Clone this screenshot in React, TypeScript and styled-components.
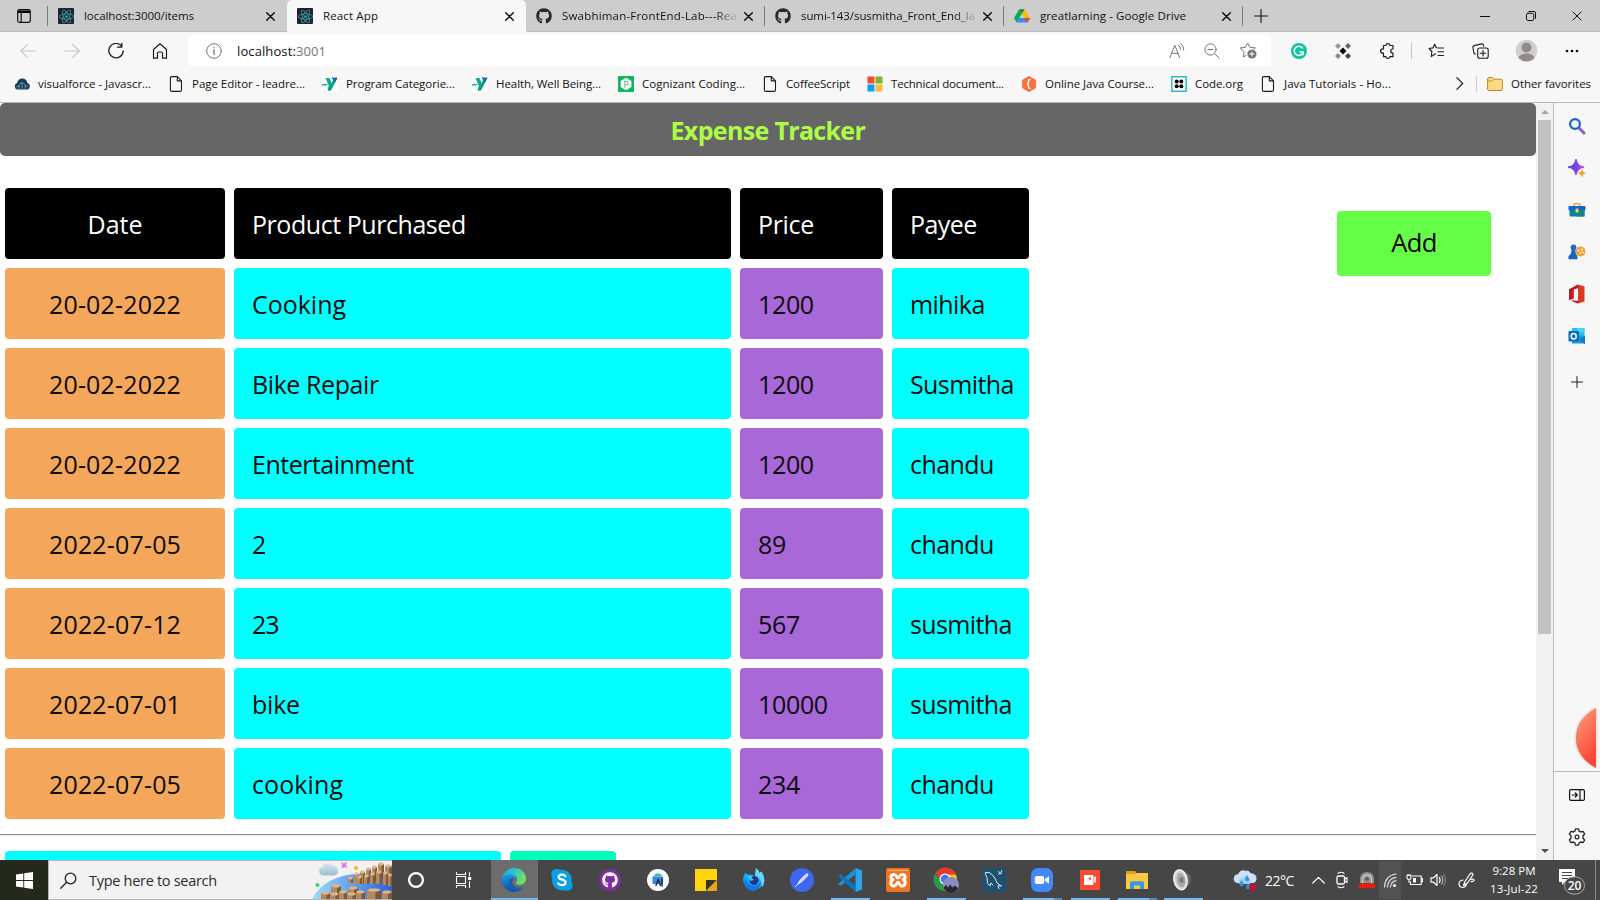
import React, { useLayoutEffect, useRef, useState } from "react";
import styled, { createGlobalStyle, css } from "styled-components";
import { FaGithub, FaReact } from "react-icons/fa";

const GlobalStyle = createGlobalStyle`
  * { box-sizing: border-box; }
  body {
    margin: 0;
    overflow: hidden;
    background: #fff;
    font-family: "Open Sans", "Noto Sans", sans-serif;
    color: #111;
  }
  svg { display: block; flex: none; }
`;

/* ---------- text that is tracked to a set measure ---------- */

const Measure = styled.span<{ $w: number }>`
  display: block;
  flex: none;
  width: ${(p) => p.$w}px;
  white-space: nowrap;
`;

const Tracked = styled.span`
  display: inline-block;
`;

function Fit({ w, children }: { w: number; children: React.ReactNode }) {
  const ref = useRef<HTMLSpanElement>(null);
  const [spacing, setSpacing] = useState(0);
  useLayoutEffect(() => {
    const el = ref.current;
    if (!el) return;
    const n = (el.textContent || "").length;
    const natural = el.getBoundingClientRect().width;
    if (n > 1) setSpacing((w - natural) / (n - 0.5));
  }, [w]);
  return (
    <Measure $w={w}>
      <Tracked ref={ref} style={{ letterSpacing: spacing }}>
        {children}
      </Tracked>
    </Measure>
  );
}

/* ---------- window ---------- */

const Screen = styled.div`
  display: flex;
  flex-direction: column;
  width: 1600px;
  height: 900px;
  overflow: hidden;
`;

const TabStrip = styled.div`
  display: flex;
  height: 32px;
  background: #cdcdcd;
  border-bottom: 1px solid #bdbdbd;
`;

const TabActions = styled.div`
  display: flex;
  align-items: center;
  justify-content: flex-end;
  gap: 16px;
  width: 48px;
`;

const NewTab = styled.div`
  display: flex;
  align-items: center;
  justify-content: center;
  width: 35px;
`;

const Rule = styled.i<{ $h: number; $c?: string }>`
  flex: none;
  width: 1px;
  height: ${(p) => p.$h}px;
  background: ${(p) => p.$c || "#7c7c7c"};
`;

const Tab = styled.div<{ $active?: boolean }>`
  display: flex;
  align-items: center;
  flex: none;
  width: 239px;
  height: 32px;
  padding-left: 10px;
  font-size: 11.5px;
  ${(p) =>
    p.$active &&
    css`
      background: #f7f7f7;
      border-radius: 5px 5px 0 0;
    `}
`;

const TabTitle = styled.div<{ $fade?: boolean }>`
  flex: none;
  width: 174px;
  margin: 0 8px 0 10px;
  overflow: hidden;
  line-height: 18px;
  ${(p) => p.$fade && css`mask-image: linear-gradient(to right, #000 88%, transparent 102%);`}
`;

const TabEnd = styled.div`
  display: flex;
  align-items: center;
  justify-content: flex-end;
  flex: 1;
`;

const Spacer = styled.div`
  flex: 1;
`;

const WindowButtons = styled.div`
  display: flex;
  align-items: center;
  gap: 36px;
  padding-right: 18px;
`;

const Toolbar = styled.div`
  display: flex;
  align-items: center;
  height: 36px;
  padding: 1px 0 0 20px;
  background: #f7f7f7;
`;

const NavButtons = styled.div`
  display: flex;
  align-items: center;
  gap: 28px;
  width: 168px;
`;

const AddressBar = styled.div`
  display: flex;
  align-items: center;
  width: 1083px;
  height: 31px;
  padding: 0 14px 0 18px;
  background: #fff;
  border-radius: 4px;
  font-size: 13px;
`;

const Url = styled.div`
  margin-left: 15px;
`;

const Muted = styled.span`
  color: #757575;
`;

const AddressIcons = styled.div`
  display: flex;
  gap: 19px;
  align-items: center;
`;

const ToolbarIcons = styled.div`
  display: grid;
  grid-template-columns: 44px 44px 44px 4px 46px 42px 50px 41px;
  align-items: center;
  justify-items: center;
  padding-left: 6px;
`;

const Bookmarks = styled.div`
  display: flex;
  align-items: center;
  height: 35px;
  padding: 0 9px 3px 14px;
  background: #f7f7f7;
  border-bottom: 1px solid #bababa;
  font-size: 11.5px;
`;

const Bookmark = styled.div<{ $end?: number }>`
  display: flex;
  align-items: center;
  gap: 8px;
  margin-right: ${(p) => p.$end ?? 17}px;
  line-height: 18px;
`;

const FavoritesFolder = styled.div`
  display: flex;
  align-items: center;
  gap: 8px;
  margin-left: 10px;
  line-height: 18px;
`;

const Body = styled.div`
  display: flex;
  height: 757px;
`;

/* ---------- expense page ---------- */

const Page = styled.main`
  width: 1536px;
  height: 757px;
  overflow: hidden;
  background: #fff;
`;

const Title = styled.h1`
  display: flex;
  justify-content: center;
  height: 53px;
  margin: 0;
  border-radius: 5px;
  background: #666;
  color: #adff45;
  font-size: 25px;
  line-height: 55px;
  font-weight: 700;
`;

const Content = styled.div`
  display: flex;
  justify-content: space-between;
  height: 678px;
  padding: 32px 45px 0 5px;
`;

const Table = styled.div`
  display: grid;
  grid-template-columns: 220px 497px 143px 137px;
  grid-auto-rows: 71px;
  gap: 9px;
`;

type Tone = "head" | "date" | "name" | "price";
const tones: Record<Tone, string> = {
  head: "#000",
  date: "#f4a65b",
  name: "#00ffff",
  price: "#a968d7",
};

const Cell = styled.div<{ $tone: Tone; $center?: boolean }>`
  display: flex;
  align-items: center;
  justify-content: ${(p) => (p.$center ? "center" : "flex-start")};
  padding: 0 ${(p) => (p.$center ? 0 : 18)}px;
  border-radius: 4px;
  background: ${(p) => tones[p.$tone]};
  color: ${(p) => (p.$tone === "head" ? "#fff" : "#0c0c0c")};
  font-size: 25px;
`;

const AddButton = styled.button`
  display: flex;
  align-items: center;
  justify-content: center;
  width: 154px;
  height: 65px;
  margin-top: 23px;
  padding: 0 0 4px;
  border: 0;
  border-radius: 4px;
  background: #66ff47;
  color: #000;
  font: 25.5px "Open Sans", sans-serif;
`;

const Divider = styled.hr`
  height: 2px;
  margin: 0 0 15px;
  border: 0;
  border-top: 1px solid #8f8f8f;
  border-bottom: 1px solid #ebebeb;
`;

const Totals = styled.div`
  display: flex;
  gap: 9px;
  padding-left: 5px;
`;

const Total = styled.div<{ $w: number; $c: string }>`
  width: ${(p) => p.$w}px;
  height: 71px;
  border-radius: 4px;
  background: ${(p) => p.$c};
`;

const Scrollbar = styled.div`
  display: flex;
  flex-direction: column;
  align-items: center;
  justify-content: space-between;
  width: 17px;
  padding: 7px 0;
  background: #f1f1f1;
`;

const Thumb = styled.div`
  width: 13px;
  height: 514px;
  margin: 6px 0 auto;
  background: #c1c1c1;
`;

const Sidebar = styled.aside`
  display: flex;
  flex-direction: column;
  align-items: center;
  width: 47px;
  border-left: 1px solid #bababa;
  background: #f7f7f7;
`;

const SideSlot = styled.div<{ $drop?: number }>`
  display: flex;
  align-items: center;
  justify-content: center;
  width: 46px;
  height: 42px;
  padding-top: ${(p) => p.$drop || 0}px;
`;

const SideTop = styled.div`
  height: 668px;
  padding-top: 2px;
`;

const SideBottom = styled.div`
  padding-top: 2px;
  border-top: 1px solid #bababa;
`;

const Recorder = styled.div`
  position: absolute;
  left: 1570px;
  top: 702px;
`;

/* ---------- taskbar ---------- */

const Taskbar = styled.footer`
  display: flex;
  height: 40px;
  background: #464646;
  color: #fff;
`;

const Start = styled.div`
  display: flex;
  flex: none;
  align-items: center;
  justify-content: center;
  width: 48px;
  background: #25281c;
`;

const Search = styled.div`
  display: flex;
  flex: none;
  align-items: center;
  width: 344px;
  padding-left: 11px;
  border: 1px solid #b4b4b4;
  border-right: 0;
  background: #f2f2f2;
  color: #2b2b2b;
  font-size: 14.5px;
`;

const SearchText = styled.div`
  flex: 1;
  padding-left: 12px;
`;

const Slot = styled.div<{ $open?: boolean; $active?: boolean; $stack?: boolean; $gap?: number }>`
  display: flex;
  align-items: center;
  justify-content: center;
  flex: none;
  width: 48px;
  height: 40px;
  margin-left: ${(p) => p.$gap || 0}px;
  ${(p) =>
    p.$open &&
    css`
      background: linear-gradient(${p.$stack ? "to right, #76b9ed 31px, #5d89ad 31px" : "#76b9ed, #76b9ed"}) center bottom / 39px 2px no-repeat;
    `}
  ${(p) =>
    p.$active &&
    css`
      background: linear-gradient(#76b9ed, #76b9ed) center bottom / 47px 2px no-repeat,
        linear-gradient(#6c6c6c, #6c6c6c) center / 47px 40px no-repeat;
    `}
`;

const Tray = styled.div`
  display: flex;
  align-items: center;
  flex: 1;
  padding-left: 26px;
`;

const Temp = styled.div`
  margin: 0 16px 0 8px;
  font-size: 14px;
`;

const TraySlot = styled.div<{ $w: number; $lit?: boolean }>`
  display: flex;
  align-items: center;
  justify-content: center;
  flex: none;
  width: ${(p) => p.$w}px;
  height: 38px;
  background: ${(p) => (p.$lit ? "#525252" : "transparent")};
`;

const Clock = styled.div`
  display: flex;
  flex: none;
  flex-direction: column;
  align-items: center;
  width: 50px;
  margin-left: 6px;
  font-size: 11.5px;
  line-height: 18px;
`;

const Notice = styled.div`
  margin: 4px 0 0 20px;
`;

const Desktop = styled.div`
  align-self: stretch;
  width: 5px;
  margin-left: auto;
  border-left: 1px solid #8b8b8b;
`;

/* ---------- icons ---------- */

const line = (c: string, w = 1.2) => ({
  fill: "none",
  stroke: c,
  strokeWidth: w,
  strokeLinecap: "round" as const,
  strokeLinejoin: "round" as const,
});

const Close = ({ s = 9, w = 1.5 }: { s?: number; w?: number }) => (
  <svg width={s} height={s} viewBox="0 0 9 9">
    <path d="M.7.7 8.3 8.3M8.3.7.7 8.3" {...line("#111", w)} />
  </svg>
);

const ReactTile = styled.div`
  display: flex;
  align-items: center;
  justify-content: center;
  flex: none;
  width: 16px;
  height: 16px;
  border-radius: 1px;
  background: #20232a;
  color: #41a9bd;
`;

const ReactIcon = () => (
  <ReactTile>
    <FaReact size={15} />
  </ReactTile>
);

const Drive = () => (
  <svg width="16" height="16" viewBox="0 0 16 16">
    <path d="M5.2 1.2 0 10l2.6 4.5L8 5.5z" fill="#0da75a" />
    <path d="M5.2 1.2h5.3L16 10h-5.3z" fill="#fbbb05" />
    <path d="M5.3 10H16l-2.6 4.5H2.6z" fill="#4284f4" />
    <path d="M10.7 10H16l-2.6 4.5z" fill="#ea4335" />
    <path d="M5.2 1.2h5.3L8 5.6z" fill="#12833c" />
  </svg>
);

const PageIcon = () => (
  <svg width="16" height="16" viewBox="0 0 16 16">
    <path d="M3.8.6h5.6l4.1 4.2v9.1q0 1.5-1.5 1.5H3.8q-1.4 0-1.4-1.4V2Q2.4.6 3.8.6zM9.3.8v4.1h4.1" {...line("#1b1b1b", 1.1)} />
  </svg>
);

const CloudIcon = () => (
  <svg width="16" height="16" viewBox="0 0 16 16">
    <path d="M3.5 13.5a3.3 3.3 0 0 1-.4-6.4C3.8 3.8 6 2.6 8.4 2.6c2.6 0 4.6 1.700 5 4.300 3.300.8 3.300 6-.3 6.600z" fill="#123f55" />
    <path d="M5 12.5V8.700l3-2.200 3.200 2.200v3.800M8 6.500v6M2.700 10.500h2.300M11.200 10h2.500" {...line("#8fb1bf", 0.7)} />
  </svg>
);

const YIcon = () => (
  <svg width="16" height="16" viewBox="0 0 16 16">
    <path d="M0 0h16v16H0z" fill="#fff" />
    <path d="M3.5 2h4l2 4.500L8 14.500H5.500l1.200-5z" fill="#12a892" />
    <path d="m8.500 2 7 0-6.500 12.500H5.800L12 2z" fill="#0b9d86" />
    <path d="M9.300 1.500h6.200l-2.400 5z" fill="#0f6cc0" />
    <path d="m.3 9.200 1.700-.8 1.400.8 1.600-1" {...line("#19a58c", 1.3)} />
  </svg>
);

const CodingIcon = () => (
  <svg width="16" height="16" viewBox="0 0 16 16">
    <path d="M0 0h16v16H0z" fill="#14b45c" />
    <path d="m8 1.800 5.400 3.100v6.200L8 14.200l-5.400-3.100V4.900z" fill="#fff" />
    <path d="M6.800 11.200V5.500h1.600a1.600 1.600 0 0 1 0 3.300H6.800" {...line("#6cc58b", 1.1)} />
  </svg>
);

const MsIcon = () => (
  <svg width="16" height="16" viewBox="0 0 16 16">
    <path d="M.5.5h7v7h-7z" fill="#fb4a25" />
    <path d="M8.500.5h7v7h-7z" fill="#76b82c" />
    <path d="M.5 8.500h7v7h-7z" fill="#00a1ee" />
    <path d="M8.500 8.500h7v7h-7z" fill="#ffb83c" />
  </svg>
);

const JavaIcon = () => (
  <svg width="16" height="16" viewBox="0 0 16 16">
    <path d="m8 0 6.900 4v8L8 16l-6.900-4V4z" fill="#fb6f3c" />
    <path d="M9 3.500Q7.500 3.500 7.500 5v1.700L6.300 8l1.200 1.300V11q0 1.500 1.500 1.500" {...line("#fff", 1.4)} />
  </svg>
);

const CodeOrgIcon = () => (
  <svg width="16" height="16" viewBox="0 0 16 16">
    <path d="M.8.8h14.400v14.400H.8z" fill="#fff" stroke="#2fbac2" strokeWidth="1.5" />
    <circle cx="5.7" cy="5.6" r="2" /><circle cx="10.3" cy="5.6" r="2" />
    <circle cx="5.7" cy="10.3" r="2" /><circle cx="10.3" cy="10.3" r="2" />
  </svg>
);

const FolderIcon = () => (
  <svg width="16" height="16" viewBox="0 0 16 16">
    <path d="M.6 3q0-1.500 1.500-1.500h3.200L7 3.200h7q1.400 0 1.400 1.400v8.500q0 1.400-1.400 1.400H2q-1.400 0-1.400-1.400z" fill="#ffd983" stroke="#b88a28" />
    <path d="M.6 5h4.600L7 3.200" fill="none" stroke="#c3922d" />
  </svg>
);

/* ---------- data ---------- */

const tabs = [
  { icon: <ReactIcon />, title: "localhost:3000/items", w: 110 },
  { icon: <ReactIcon />, title: "React App", w: 55, active: true },
  { icon: <FaGithub size={16} color="#24292f" />, title: "Swabhiman-FrontEnd-Lab---Rea", w: 175, fade: true, rule: true },
  { icon: <FaGithub size={16} color="#24292f" />, title: "sumi-143/susmitha_Front_End_la", w: 174, fade: true, rule: true },
  { icon: <Drive />, title: "greatlarning - Google Drive", w: 146, rule: true },
];

const bookmarks: [React.ReactNode, string, number][] = [
  [<CloudIcon />, "visualforce - Javascr...", 113],
  [<PageIcon />, "Page Editor - leadre...", 113],
  [<YIcon />, "Program Categorie...", 109],
  [<YIcon />, "Health, Well Being...", 105],
  [<CodingIcon />, "Cognizant Coding...", 103],
  [<PageIcon />, "CoffeeScript", 64],
  [<MsIcon />, "Technical document...", 113],
  [<JavaIcon />, "Online Java Course...", 109],
  [<CodeOrgIcon />, "Code.org", 48],
  [<PageIcon />, "Java Tutorials - Ho...", 107],
];

const rows: [string, string, number, string, number, string, number][] = [
  ["20-02-2022", "Cooking", 94, "1200", 56, "mihika", 75],
  ["20-02-2022", "Bike Repair", 127, "1200", 56, "Susmitha", 104],
  ["20-02-2022", "Entertainment", 162, "1200", 56, "chandu", 84],
  ["2022-07-05", "2", 14, "89", 28, "chandu", 84],
  ["2022-07-12", "23", 27, "567", 42, "susmitha", 102],
  ["2022-07-01", "bike", 48, "10000", 70, "susmitha", 102],
  ["2022-07-05", "cooking", 91, "234", 42, "chandu", 84],
];

/* basalt columns for the search box picture */
const columns: [number, number, number, number][] = [
  [60, 6, 5, 14], [66, 3, 6, 14], [73, 5, 7, 15], [54, 8, 5, 13], [48, 11, 5, 12], [42, 13, 5, 10],
  [36, 17, 5, 5], [45, 16, 5, 7], [52, 15, 5, 8], [58, 13, 5, 10], [64, 11, 6, 12], [71, 12, 5, 12], [76, 14, 4, 11],
  [19, 25, 10, 13], [36, 27, 10, 11], [9, 32, 9, 6], [18, 33, 9, 5], [27, 31, 8, 7], [35, 33, 9, 5], [44, 31, 9, 7], [55, 29, 14, 9], [70, 31, 10, 7],
];

const SearchArt = () => (
  <svg width="80" height="38" viewBox="0 0 80 38">
    <defs>
      <linearGradient id="sea" x1="0" x2="1"><stop offset="0" stopColor="#9be0ff" /><stop offset="1" stopColor="#2b62d9" /></linearGradient>
      <linearGradient id="cld" x1="0" y1="0" x2="0" y2="1"><stop offset="0" stopColor="#d5e6ee" /><stop offset="1" stopColor="#9dbdcb" /></linearGradient>
    </defs>
    <path d="M0 38Q12 15 45 13h35v25z" fill="url(#sea)" />
    <path d="M11 14.500a4.500 4.500 0 0 1-.5-8.800Q12 1.500 16.500 2.500q3-1 5 2.500 4 0 4.500 5 0 4-4 4.500z" fill="url(#cld)" />
    <path d="m29 1 3 1.500L35 .5 34 4l1.500 3-3-1-3 1.500.5-3.500z" fill="#da7bf2" />
    <circle cx="44" cy="7" r="2" fill="#fbb116" />
    <circle cx="5.5" cy="24" r="2" fill="#4dcb76" />
    {columns.map(([x, y, w, h], i) => (
      <g key={i}>
        <path d={`M${x} ${y}h${w}v${h}h-${w}z`} fill="#b38a60" />
        <path d={`M${x + w * 0.6} ${y}h${w * 0.4}v${h}h-${w * 0.4}z`} fill="#7c583a" />
        <path d={`M${x} ${y}l${w / 4}-1.600h${w / 2}l${w / 4} 1.600-${w / 4} 1.500h-${w / 2}z`} fill="#dcb78b" />
      </g>
    ))}
  </svg>
);

const EdgeIcon = () => (
  <svg width="24" height="24" viewBox="0 0 24 24">
    <defs>
      <linearGradient id="eg" x1="0" y1="0" x2="1" y2=".3"><stop offset="0" stopColor="#1e9fdc" /><stop offset=".55" stopColor="#34c7c9" /><stop offset="1" stopColor="#6fe35a" /></linearGradient>
      <linearGradient id="eb" x1="0" y1="0" x2="0" y2="1"><stop offset="0" stopColor="#1c9be6" /><stop offset="1" stopColor="#0d4fa0" /></linearGradient>
    </defs>
    <path d="M0 11.500C.6 5 5.500 0 12 0c7 0 12 5 12 10.500 0 4-3 6.300-6.200 6.300-2.800 0-4-1-4-1.900 0-.8 1.200-1.300 1.200-3.400 0-2-2-4.200-5-4.200C6 7.300 1 8.500 0 11.500z" fill="url(#eg)" />
    <path d="M0 12C.5 8 4.500 6.300 8.500 6.300c4 0 6.500 2.500 6.500 5.200-.3-1.200-1.700-2-3.200-2-2.400 0-4 2.200-4 4.800 0 4.500 4.200 7.700 8.200 7.200 2.500-.3 4.500-1.500 5.500-2.500-.5 1.500-4 5-9.500 5C5 24 0 18.500 0 12z" fill="url(#eb)" />
    <path d="M8.500 10.500C6 12.500 6 18 9.500 20.500c3 2.200 8 2 11.800-1.500-4 1.300-8.500.8-10.300-2.300-1.200-2-.9-4 .5-6.200z" fill="#1460ad" />
  </svg>
);

const apps: { icon: React.ReactNode; open?: boolean; active?: boolean; stack?: boolean; gap?: number }[] = [
  { icon: <svg width="18" height="18" viewBox="0 0 18 18"><circle cx="9" cy="9" r="6.9" {...line("#fff", 2.2)} /></svg> },
  { icon: <svg width="18" height="18" viewBox="0 0 18 18"><path d="M1.500 1.500v2h9v-2M1.500 16.500v-2h9v2M1.500 5.500h9v7h-9zM14.500 1.500v3.500M14.500 10.500v6" {...line("#fff", 1.1)} /><path d="M13 6h3.200v3H13z" fill="#fff" /></svg> },
  { gap: 2, active: true, icon: <EdgeIcon /> },
  { icon: <svg width="22" height="22" viewBox="0 0 22 22"><path d="M2 1Q6-1 9 .8q7-1 10.500 5 1.700 3 1 6.500Q22.500 16 21 19.500q-3 3.500-7 1.800Q7 22 3 17.500.5 14 1.200 9.500-1 4 2 1z" fill="#0ba0e4" /><path d="M14.300 7.200q-1-1.600-3.600-1.600-3 0-3 2.500 0 1.800 3.300 2.500 3.600.8 3.600 2.900 0 2.600-3.500 2.600-2.700 0-3.900-1.700" {...line("#fff", 2.2)} /></svg> },
  { icon: <svg width="22" height="22" viewBox="0 0 22 22"><circle cx="11" cy="11" r="11" fill="#7f2f9d" /><FaGithub x={3} y={3} size={16} color="#fff" /></svg> },
  { icon: <svg width="22" height="22" viewBox="0 0 22 22"><circle cx="11" cy="11" r="11" fill="#fff" /><path d="M6.500 7.500 8.500 5q4-2 7 2z" fill="#35c486" /><path d="M5.500 7.500h10.600v7.600H5.500z" fill="#3f7fe8" /><path d="m9 16.500 2.200-6 2.200 6M15 17V10" {...line("#172c4e", 1.4)} /></svg> },
  { icon: <svg width="22" height="22" viewBox="0 0 22 22"><path d="M0 0h22v22H0z" fill="#ffd60b" /><path d="M11 11h11L11 22z" fill="#37342a" /><path d="M22 11v11H11z" fill="#e9a512" /></svg> },
  { icon: <svg width="24" height="24" viewBox="0 0 24 24"><path d="M1 12q0-4 2.500-7.500l1.800 2L8 6.200 13 8l1-8q3 2.500 3.400 5l2-1.500q3 4 3 8.500A10.800 11.500 0 0 1 1 12z" fill="#18aaf4" /><path d="M14 0q3 2.500 3.400 5l2-1.500Q25 12 20 19.500 19.500 9 13 8z" fill="#61d8fa" /><path d="M3 10q4 9 10 8 5-1 6-6 0 9-8 11-7-1-9-7z" fill="#1279dc" /><circle cx="12" cy="12.5" r="4.6" fill="#24328f" /><path d="M6 8h5l-1.500 2L12 12l-4 1z" fill="#3cc5fb" /></svg> },
  { icon: <svg width="24" height="24" viewBox="0 0 24 24"><circle cx="12" cy="12" r="12" fill="#3f66ee" /><path d="m7.500 16.500 2.500-4.500 5.500-5.500q2-1.500 2.500-.5.300 1-.8 2.500L11.500 14z" fill="#cfd9ff" stroke="#fff" strokeWidth=".6" /><path d="m5.500 18.500 4-4" {...line("#fff", 1)} /></svg> },
  { open: true, icon: <svg width="24" height="24" viewBox="0 0 24 24"><path d="M17.500 0 24 2.500v19L17.500 24z" fill="#2aa5ef" /><path d="M17.500 0v6.500L2.500 18 0 16z" fill="#1f8fd8" /><path d="M17.500 24v-6.500L2.500 6 0 8z" fill="#0a76c2" /></svg> },
  { icon: <svg width="24" height="24" viewBox="0 0 24 24"><rect width="24" height="24" rx="2" fill="#ee7623" /><path d="M2 2.500h20" stroke="#f8b27a" /><path d="M8 6.500c-4 0-4 4.200-1 5-3 1-3 6.500 1 6.500 3 0 2-3.500 4-3.500s1 3.500 4 3.500c4 0 4-5.500 1-6.500 3-.8 3-5-1-5-3 0-2 3.500-4 3.500S11 6.500 8 6.500z" {...line("#fff", 3)} /></svg> },
  { open: true, icon: <svg width="26" height="26" viewBox="0 0 26 26"><path d="M2.500 6A11.500 11.500 0 0 1 23 7.500H12L8 14z" fill="#e33b2e" /><path d="M2.500 6 8 15l5 3-2.500 6A11.500 11.500 0 0 1 2.500 6z" fill="#279b4b" /><path d="M23 7.500Q26 15 20 21l-9 3 6-9-2-7.500z" fill="#fbc116" /><circle cx="12" cy="12" r="5.5" fill="#fff" /><circle cx="12" cy="12" r="4.3" fill="#3c78e6" /><circle cx="18" cy="18" r="8" fill="#8c8cc0" /><path d="M10.500 20.500 13 18l2 2.500 2-3 2.500 3 2-2 3.500 2.500Q23 26 18 26t-7.500-5.500z" fill="#2a2832" /></svg> },
  { icon: <svg width="24" height="24" viewBox="0 0 24 24"><rect width="24" height="24" rx="3" fill="#1e506f" /><path d="M3.500 4.500q4-1.500 7 2.500 3.500 4 4.500 8l4.500 3-3.500-.3 1 3M3.500 4.500Q3 7 5 9.500l.5 6 2.500 2.500.5-3 2.500 2M16.500 3.500q.5 2 3 2.500M16.500 6.500q3-1 3.500-4" {...line("#dde8ef", 1)} /></svg> },
  { open: true, stack: true, icon: <svg width="22" height="24" viewBox="0 0 22 24"><rect width="22" height="24" rx="7" fill="#4089fb" /><rect x="3.8" y="8" width="9.4" height="8" rx="1.8" fill="#fff" /><path d="m14 11 4-2.800v7.600L14 13z" fill="#fff" /></svg> },
  { open: true, icon: <svg width="20" height="20" viewBox="0 0 20 20"><path d="M0 0h20v20H0z" fill="#fb4934" /><rect x="4" y="5" width="9.5" height="10" rx="1" fill="#fff" /><path d="M14 7.500 15.800 6v7L14 11.800z" fill="#fff" /><circle cx="10" cy="8.5" r="1.3" fill="#fb4934" /></svg> },
  { gap: -1, open: true, stack: true, icon: <svg width="22" height="18" viewBox="0 0 22 18"><path d="M0 0h9l1.500 2H22v16H0z" fill="#fdc945" /><path d="M0 0h9l1 3H0z" fill="#e49f13" /><path d="M4 18v-6q0-1.700 1.700-1.700h10.600Q18 10.300 18 12v6h-4v-3.500H8V18z" fill="#3b97e3" /></svg> },
  { gap: -2, open: true, icon: <svg width="20" height="22" viewBox="0 0 20 22"><path d="m9 1 8 5q2 5-1 10l-7 5z" fill="#666" /><path d="m8 0 6 7v8l-5 6.500z" fill="#8b8b8b" /><ellipse cx="7.5" cy="10.8" rx="6.5" ry="10" fill="#cfd3d5" stroke="#f2f2f2" strokeWidth="1.5" transform="rotate(-10 7.5 10.8)" /><ellipse cx="8" cy="11" rx="4.3" ry="7.3" fill="#a4aaad" transform="rotate(-10 8 11)" /><ellipse cx="8.5" cy="11" rx="2" ry="3" fill="#73797c" /></svg> },
];

const sideIcons = [
  <svg width="18" height="18" viewBox="0 0 18 18"><path d="m11 11 5 5" {...line("#9257dd", 3)} /><circle cx="7" cy="7" r="4.9" {...line("#1d62c9", 2.2)} /></svg>,
  <svg width="18" height="18" viewBox="0 0 18 18"><defs><linearGradient id="sp"><stop offset="0" stopColor="#3e4bea" /><stop offset="1" stopColor="#c13be6" /></linearGradient></defs><path d="M8 .5q1 6.500 7.500 7.500Q9 9 8 15.500 7 9 .5 8 7 7 8 .5z" fill="url(#sp)" stroke="url(#sp)" strokeWidth="1.4" strokeLinejoin="round" /><path d="M14 10.700q.5 3 3.400 3.500-2.900.5-3.400 3.500-.5-3-3.400-3.500 2.900-.5 3.400-3.500z" fill="#f6a623" stroke="#f6a623" strokeWidth=".6" /></svg>,
  <svg width="18" height="14" viewBox="0 0 18 14"><path d="M6 3V1.600q0-.8.8-.8h4.400q.8 0 .8.8V3" {...line("#e7a53a", 1.5)} /><rect x=".5" y="3" width="17" height="4.5" rx="1" fill="#1863cf" /><path d="M1.500 7h15v5.500q0 1-1 1h-13q-1 0-1-1z" fill="#117fa0" /><path d="M9 7h7.500v6.500H9z" fill="#17887e" /><rect x="7.5" y="5.5" width="3" height="4" rx="1" fill="#ffd15a" /></svg>,
  <svg width="18" height="16" viewBox="0 0 18 16"><circle cx="12.5" cy="7.5" r="5" fill="#eda237" /><circle cx="10.5" cy="6.5" r=".9" fill="#fff" /><circle cx="14" cy="5.5" r=".9" fill="#fff" /><circle cx="12.5" cy="9" r=".9" fill="#fff" /><circle cx="15.5" cy="8.5" r=".8" fill="#fff" /><circle cx="5.5" cy="3.3" r="2.9" fill="#1a6fd6" /><path d="M3 5.500h5l-.8 1.300q0 3 2.300 5.200v3.300H.5V12q3-2 3.100-5.200z" fill="#1a63c0" /></svg>,
  <svg width="18" height="20" viewBox="0 0 18 20"><path d="M10 .5 16.500 2.500v15L10 19.500l-7.500-3 7.500.8V4L6 5v9.500L1 16V5.500z" fill="#d83b1e" /><path d="M10 .5 1 5.500V16l3.500-1.500V6L10 4z" fill="#b31831" /><path d="m3 16.500 7 3v-2.700z" fill="#c90f46" /></svg>,
  <svg width="18" height="18" viewBox="0 0 18 18"><path d="M4 1h12.500v8H4z" fill="#29c0ef" /><path d="M9 1h7.500v4H9z" fill="#47d4fa" /><path d="M4 8.500h13v8H4z" fill="#149ddd" /><path d="m17 9-6 4 6 4z" fill="#117ac2" /><rect x=".5" y="4" width="10.5" height="10.5" rx="1" fill="#0a6bbb" /><ellipse cx="5.7" cy="9.2" rx="2.5" ry="2.8" {...line("#fff", 1.5)} /></svg>,
];

export default function App() {
  return (
    <Screen>
      <GlobalStyle />
      <TabStrip>
        <TabActions>
          <svg width="14" height="14" viewBox="0 0 14 14"><rect x=".7" y=".7" width="12.6" height="12.6" rx="1.8" {...line("#111", 1.2)} /><path d="M1 1.500h12V4H1z" /><path d="M4.200 4v9.500" {...line("#111", 1.2)} /></svg>
          <Rule $h={20} />
        </TabActions>
        {tabs.map((t, i) => (
          <Tab key={i} $active={t.active}>
            {t.icon}
            <TabTitle $fade={t.fade}><Fit w={t.w}>{t.title}</Fit></TabTitle>
            <Close />
            <TabEnd>{t.rule && <Rule $h={20} />}</TabEnd>
          </Tab>
        ))}
        <NewTab>
          <svg width="14" height="14" viewBox="0 0 14 14"><path d="M7 .5v13M.5 7h13" {...line("#111", 1.1)} /></svg>
        </NewTab>
        <Spacer />
        <WindowButtons>
          <svg width="10" height="10" viewBox="0 0 10 10"><path d="M0 5.500h10" {...line("#111", 1)} /></svg>
          <svg width="10" height="10" viewBox="0 0 10 10"><rect x=".5" y="2.3" width="7.2" height="7.2" rx="1.3" {...line("#111", 1)} /><path d="M2.800.5H8Q9.500.5 9.500 2v5.300" {...line("#111", 1)} /></svg>
          <Close s={10} w={0.9} />
        </WindowButtons>
      </TabStrip>

      <Toolbar>
        <NavButtons>
          <svg width="16" height="16" viewBox="0 0 16 16"><path d="M15.500 8H.7M7.500 1.300.7 8l6.800 6.700" {...line("#c6c6c6", 1.1)} /></svg>
          <svg width="16" height="16" viewBox="0 0 16 16"><path d="M.5 8h14.800M8.500 1.300 15.300 8l-6.800 6.700" {...line("#c6c6c6", 1.1)} /></svg>
          <svg width="16" height="16" viewBox="0 0 16 16"><path d="M13.500 3A7.200 7.200 0 1 0 15.200 8M13.800.3v3.900H9.600" {...line("#1b1b1b", 1.3)} /></svg>
          <svg width="16" height="16" viewBox="0 0 16 16"><path d="M1.500 6.500 8 .8l6.500 5.700v8.700h-4V10.300q0-1.300-1.300-1.300H6.800q-1.300 0-1.300 1.300v4.900h-4z" {...line("#1b1b1b", 1.2)} /></svg>
        </NavButtons>
        <AddressBar>
          <svg width="16" height="16" viewBox="0 0 16 16"><circle cx="8" cy="8" r="7.3" {...line("#767676", 1)} /><path d="M8 7v4.500M8 4.300v.4" {...line("#767676", 1.3)} /></svg>
          <Url><Fit w={89}>localhost:<Muted>3001</Muted></Fit></Url>
          <Spacer />
          <AddressIcons>
            <svg width="16" height="16" viewBox="0 0 16 16"><path d="M1 14.500 5.800 2.200l4.800 12.300M2.700 10.300h6.200M9.500 2.200q2 1.500 2 4M12 .7q3 2.500 2.800 6.300" {...line("#767676", 1)} /></svg>
            <svg width="16" height="16" viewBox="0 0 16 16"><circle cx="6.5" cy="6.5" r="5.6" {...line("#767676", 1)} /><path d="M4 6.500h5M10.700 10.700l4.500 4.500" {...line("#767676", 1)} /></svg>
            <svg width="18" height="17" viewBox="0 0 18 17"><path d="M15 6.800 16.300 5.900 10.800 5.300 8.700 1 6.500 5.300 1.200 6 5.100 9.800 4.200 15 7 13.500" {...line("#767676", 1)} /><circle cx="12.9" cy="12" r="4.6" fill="#767676" /><path d="M12.900 9.500v5M10.400 12h5" stroke="#fff" strokeWidth="1" /></svg>
          </AddressIcons>
        </AddressBar>
        <ToolbarIcons>
          <svg width="16" height="16" viewBox="0 0 16 16"><circle cx="8" cy="8" r="8" fill="#0fc3a0" /><path d="M11.500 5A4.600 4.600 0 1 0 12.300 9H8.800M12.300 8.800v3" {...line("#fff", 1.5)} /></svg>
          <svg width="16" height="16" viewBox="0 0 16 16"><path d="m3 0 3 3-3 3-3-3z" fill="#999" /><path d="m13 0 3 3-3 3-3-3z" fill="#666" /><path d="m8 4.500 3.500 3.500L8 11.500 4.500 8z" fill="#000" /><path d="m3 10 3 3-3 3-3-3z" fill="#8c8c8c" /><path d="m13 10 3 3-3 3-3-3z" fill="#444" /></svg>
          <svg width="16" height="16" viewBox="0 0 16 16"><path d="M4.500 2.500h2.300Q7 .6 8.800.6t2 1.900h3.200V6q-2.300 0-2.300 2T14 10v3.700h-3.200q-.2 1.700-2 1.700t-2-1.700H4.500V10.200Q1.500 10.200 1.500 8t3-2.200z" {...line("#1b1b1b", 1.2)} /></svg>
          <Rule $h={16} $c="#c3c3c3" />
          <svg width="16" height="16" viewBox="0 0 16 16"><path d="M9 4.800h-.7L6.700 1.200 4.900 4.900 1 5.500l2.900 3-.7 5 4.300-2.700M10 5h5.500M10 8.700h5.500M10 12.500h5.500" {...line("#1b1b1b", 1.1)} /></svg>
          <svg width="17" height="16" viewBox="0 0 17 16"><rect x="5.7" y="5" width="10.5" height="10.3" rx="2" {...line("#1b1b1b", 1.1)} /><path d="M11 7.500v5.500M8.200 10.200h5.500M3.500 11.200Q2.200 11 1.800 9.500L.9 4.500Q.7 3 2.200 2.600L9.500.9q1.600-.3 2 1.200l.3 1" {...line("#1b1b1b", 1.1)} /></svg>
          <svg width="23" height="23" viewBox="0 0 23 23"><defs><clipPath id="av"><circle cx="11.5" cy="11.5" r="11" /></clipPath></defs><g clipPath="url(#av)"><circle cx="11.5" cy="11.5" r="11" fill="#d0cfcd" /><circle cx="11.5" cy="8.5" r="5" fill="#8e8b88" /><ellipse cx="11.5" cy="19.5" rx="8" ry="5" fill="#8e8b88" /></g></svg>
          <svg width="14" height="4" viewBox="0 0 14 4"><circle cx="2" cy="2" r="1.3" /><circle cx="7" cy="2" r="1.3" /><circle cx="12" cy="2" r="1.3" /></svg>
        </ToolbarIcons>
      </Toolbar>

      <Bookmarks>
        {bookmarks.map(([icon, label, w], i) => (
          <Bookmark key={i}>{icon}<Fit w={w}>{label}</Fit></Bookmark>
        ))}
        <Spacer />
        <Bookmark $end={12}>
          <svg width="8" height="13" viewBox="0 0 8 13"><path d="m1 .8 5.700 5.700L1 12.200" {...line("#333", 1.3)} /></svg>
        </Bookmark>
        <Rule $h={16} $c="#c8c8c8" />
        <FavoritesFolder><FolderIcon /><Fit w={80}>Other favorites</Fit></FavoritesFolder>
      </Bookmarks>

      <Body>
        <Page>
          <Title><Fit w={195}>Expense Tracker</Fit></Title>
          <Content>
            <Table>
              <Cell $tone="head" $center><Fit w={55}>Date</Fit></Cell>
              <Cell $tone="head"><Fit w={214}>Product Purchased</Fit></Cell>
              <Cell $tone="head"><Fit w={56}>Price</Fit></Cell>
              <Cell $tone="head"><Fit w={67}>Payee</Fit></Cell>
              {rows.map(([date, name, nw, price, pw, payee, yw], i) => (
                <React.Fragment key={i}>
                  <Cell $tone="date" $center><Fit w={132}>{date}</Fit></Cell>
                  <Cell $tone="name"><Fit w={nw}>{name}</Fit></Cell>
                  <Cell $tone="price"><Fit w={pw}>{price}</Fit></Cell>
                  <Cell $tone="name"><Fit w={yw}>{payee}</Fit></Cell>
                </React.Fragment>
              ))}
            </Table>
            <AddButton><Fit w={46}>Add</Fit></AddButton>
          </Content>
          <Divider />
          <Totals>
            <Total $w={496} $c="#00ffff" />
            <Total $w={106} $c="#00ffb8" />
          </Totals>
        </Page>
        <Scrollbar>
          <svg width="8" height="4" viewBox="0 0 8 4"><path d="M4 0l4 4H0z" fill="#a3a3a3" /></svg>
          <Thumb />
          <svg width="8" height="4" viewBox="0 0 8 4"><path d="M4 4 0 0h8z" fill="#505050" /></svg>
        </Scrollbar>
        <Sidebar>
          <SideTop>
            {sideIcons.map((icon, i) => <SideSlot key={i}>{icon}</SideSlot>)}
            <SideSlot $drop={7}>
              <svg width="12" height="12" viewBox="0 0 12 12"><path d="M6 .5v11M.5 6h11" {...line("#222", 1)} /></svg>
            </SideSlot>
          </SideTop>
          <SideBottom>
            <SideSlot>
              <svg width="16" height="12" viewBox="0 0 16 12"><rect x=".6" y=".6" width="14.8" height="10.8" rx="1.5" {...line("#111", 1.2)} /><path d="M11 1v10M3.200 6h5M6.300 4l2 2-2 2" {...line("#111", 1.2)} /></svg>
            </SideSlot>
            <SideSlot>
              <svg width="18" height="18" viewBox="0 0 18 18"><path d="M7.500.8h3l.6 2.300 1.600.9 2.300-.6L16.700 6 15 7.800v2.400L16.700 12 15 14.600l-2.300-.6-1.600.9-.6 2.300h-3l-.6-2.300-1.600-.9-2.300.6L1.300 12 3 10.200V7.800L1.300 6 3 3.400 5.300 4l1.600-.9z" {...line("#222", 1.3)} /><circle cx="9" cy="9" r="1.9" {...line("#222", 1.2)} /></svg>
            </SideSlot>
          </SideBottom>
        </Sidebar>
      </Body>

      <Recorder>
        <svg width="30" height="72" viewBox="0 0 30 72">
          <defs>
            <linearGradient id="rec" x1="0" y1="0" x2=".4" y2="1"><stop offset="0" stopColor="#ffa07c" /><stop offset="1" stopColor="#f84837" /></linearGradient>
            <filter id="soft" x="-30%" y="-20%" width="160%" height="140%"><feGaussianBlur stdDeviation="1.5" /></filter>
          </defs>
          <path d="M26 6Q6 17 6 36t20 30z" fill="#000" opacity=".25" filter="url(#soft)" />
          <path d="M26 6Q6 17 6 36t20 30z" fill="url(#rec)" />
        </svg>
      </Recorder>

      <Taskbar>
        <Start>
          <svg width="17" height="17" viewBox="0 0 17 17"><path d="M0 2.400 7.300 1.400v6.700H0zM8.200 1.200 17 0v8.100H8.200zM0 9h7.300v6.600L0 14.600zM8.200 9H17v8l-8.800-1.200z" fill="#fff" /></svg>
        </Start>
        <Search>
          <svg width="17" height="17" viewBox="0 0 17 17"><circle cx="10.5" cy="6.5" r="5.3" {...line("#222", 1.3)} /><path d="M6.700 10.300.7 16.300" {...line("#222", 1.3)} /></svg>
          <SearchText><Fit w={128}>Type here to search</Fit></SearchText>
          <SearchArt />
        </Search>
        {apps.map((a, i) => (
          <Slot key={i} $open={a.open} $active={a.active} $stack={a.stack} $gap={a.gap}>{a.icon}</Slot>
        ))}
        <Tray>
          <svg width="24" height="24" viewBox="0 0 24 24"><path d="M4 15a4.500 4.500 0 0 1 1-8.800Q8 .5 13 3q2-1.500 4.500 2Q24 6 23.500 11q-.5 4-4 4z" fill="#cfe0f5" /><path d="M6 12q6-6 12 0l-1 4H6z" fill="#a9c9ef" /><path d="M8.500 12q-3 4-1 6 2 1 3-1 .5-1.500-2-5zM14 7q-3 4-1 6 2 1 3-1 .5-1.500-2-5zM15 15q-3 4-1 6 2 1 3-1 .5-1.500-2-5z" fill="#1a9fee" /><circle cx="19.5" cy="19.5" r="3.5" fill="#c90f35" /></svg>
          <Temp><Fit w={29}>22°C</Fit></Temp>
          <TraySlot $w={16}><svg width="13" height="8" viewBox="0 0 13 8"><path d="m.8 7 5.700-5.700L12.200 7" {...line("#fff", 1.2)} /></svg></TraySlot>
          <TraySlot $w={32}><svg width="12" height="18" viewBox="0 0 12 18"><rect x="1" y="5" width="7.5" height="8" rx="1.5" {...line("#fff", 1.3)} /><path d="m8.800 8 2.200-1.500v5L8.800 10M2 2.200q3-2 6 0M2 15.800q3 2 6 0" {...line("#fff", 1.1)} /></svg></TraySlot>
          <TraySlot $w={17}><svg width="16" height="18" viewBox="0 0 16 18"><path d="M1 12V7q1-6 7-6t7 6v5z" fill="#8e8e8e" /><path d="M3.500 12V8q1-4 4.500-4t4.500 4v4" {...line("#c9c9c9", 1.3)} /><circle cx="8" cy="8" r="1.8" fill="#555" /><path d="M0 12.500h16V17H0z" fill="#ee1c06" /></svg></TraySlot>
          <TraySlot $w={4} />
          <TraySlot $w={22} $lit><svg width="14" height="15" viewBox="0 0 14 15"><path d="M1.500 14Q2 2.500 13 1M4.500 14Q5 5.500 13 4.300M7.500 14Q8 8.500 13 7.600" {...line("#ddd", 1.2)} /><circle cx="11.5" cy="12.5" r="1.6" fill="#fff" /></svg></TraySlot>
          <TraySlot $w={26}><svg width="17" height="12" viewBox="0 0 17 12"><path d="M6.500 2h8.700v8.500H4.500V7.500M15.500 4.500h1v3.300h-1M1 1.500v2.300q0 1.700 2 1.700t2-1.700V1.500zM2 0v1.500M4 0v1.500M3 5.500v3" {...line("#fff", 1.1)} /><path d="M7 4h3v4.500H7z" fill="#fff" /></svg></TraySlot>
          <TraySlot $w={22}><svg width="17" height="14" viewBox="0 0 17 14"><path d="M1 4.800h2.500L7 1.500v11L3.500 9.200H1zM9.300 4.500q1.700 2.500 0 5" {...line("#fff", 1.2)} /><path d="M11.500 3q2.700 4 0 8" {...line("#bbb", 1.1)} /><path d="M13.700 1.500q3.600 5.500 0 11" {...line("#888", 1.1)} /></svg></TraySlot>
          <TraySlot $w={34}><svg width="17" height="17" viewBox="0 0 17 17"><path d="M5 8Q1 8.500 1 12t4 3.500Q8 15 8.500 12M5.500 13.500 7 9.500 12 2q1.500-1.500 2.500-.5t0 2L9.500 11zM12.500 7.500q4-1 3.500 1-.5 1.200-3 1" {...line("#fff", 1.2)} /></svg></TraySlot>
          <Clock>
            <Fit w={43}>9:28 PM</Fit>
            <Fit w={48}>13-Jul-22</Fit>
          </Clock>
          <Notice>
            <svg width="28" height="26" viewBox="0 0 28 26">
              <path d="M0 0h16v13H6l-3 3v-3H0z" fill="#fff" />
              <path d="M3 3.500h10M3 6.500h10M3 9.500h10" stroke="#464646" strokeWidth="1" />
              <rect x="5.5" y="8" width="20" height="17" rx="8.5" fill="#464646" stroke="#aaa" />
              <text x="15.5" y="21" textAnchor="middle" fontSize="12" fontWeight="600" fill="#fff" fontFamily="Open Sans, sans-serif">20</text>
            </svg>
          </Notice>
          <Desktop />
        </Tray>
      </Taskbar>
    </Screen>
  );
}
